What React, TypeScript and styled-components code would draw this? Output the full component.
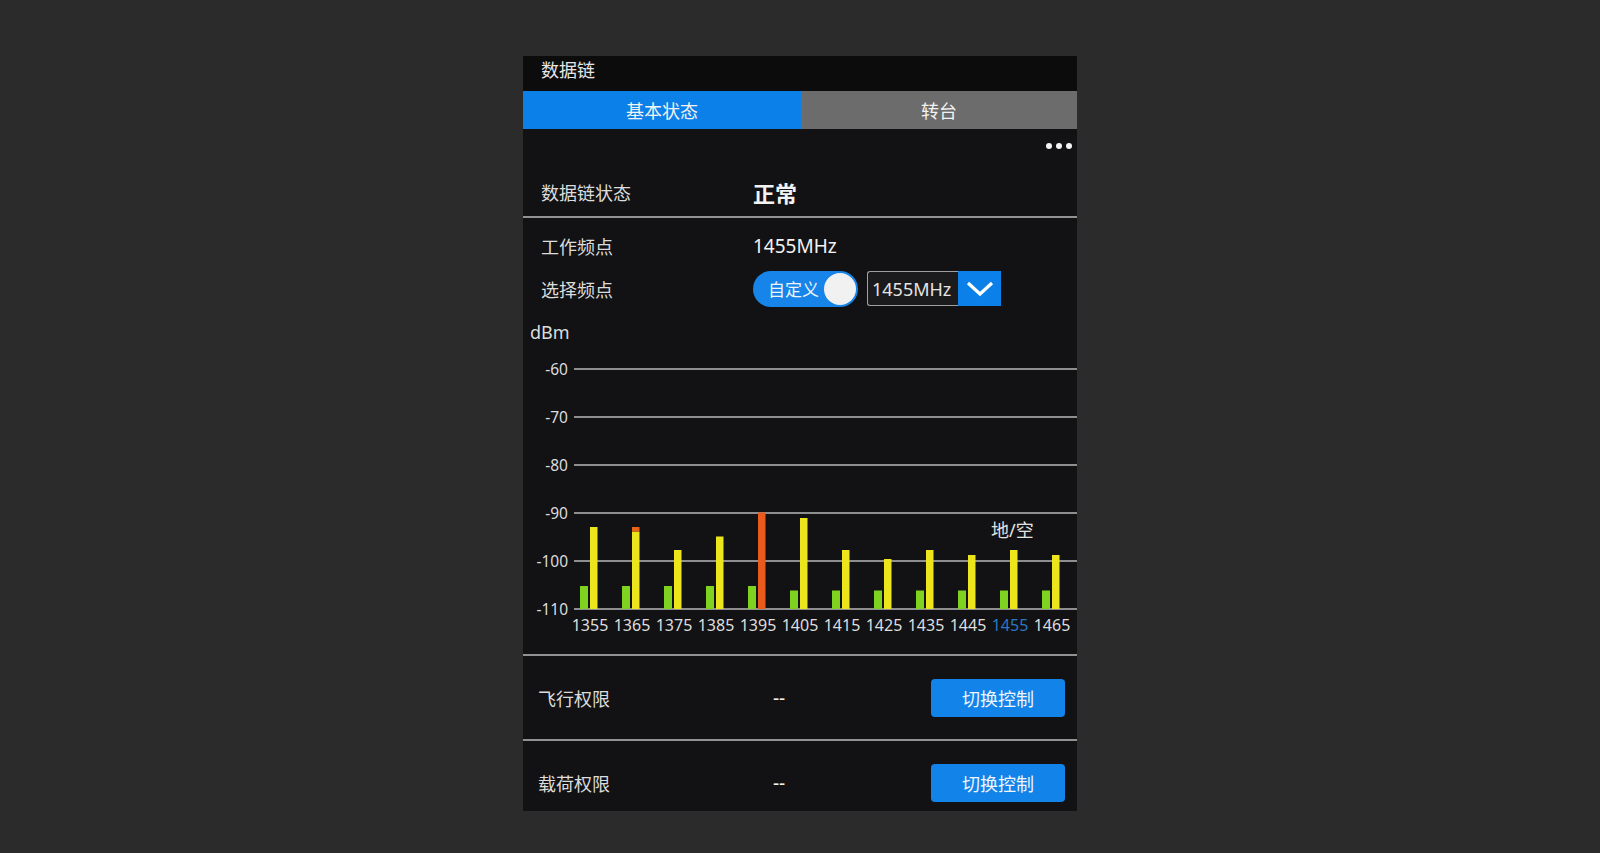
import styled, { createGlobalStyle } from 'styled-components'

const GlobalStyle = createGlobalStyle`
  *, *::before, *::after {
    box-sizing: border-box;
  }
  html, body {
    margin: 0;
    padding: 0;
    background: #2b2b2b;
  }
  body {
    font-family: "Noto Sans", "Noto Sans CJK SC", sans-serif;
    color: #e2e2e2;
  }
`

const Page = styled.div`
  width: 1600px;
  height: 853px;
  padding: 56px 0 0 523px;
`

const Panel = styled.div`
  width: 554px;
  height: 755px;
  background: #121214;
  overflow: hidden;
  display: flex;
  flex-direction: column;
`

const TitleBar = styled.div`
  height: 35px;
  flex-shrink: 0;
  background: #0c0c0d;
  display: flex;
  align-items: center;
  padding: 0 0 10px 18px;
  font-size: 18px;
  color: #e6e6e6;
`

const Tabs = styled.div`
  height: 38px;
  flex-shrink: 0;
  display: grid;
  grid-template-columns: 278px 1fr;
`

const Tab = styled.div<{ $active?: boolean }>`
  display: flex;
  align-items: center;
  justify-content: center;
  font-size: 18px;
  color: #f2f2f2;
  background: ${p => (p.$active ? '#0b80e9' : '#6c6c6c')};
`

const MoreRow = styled.div`
  height: 34px;
  flex-shrink: 0;
  display: flex;
  align-items: center;
  justify-content: flex-end;
  padding-right: 5px;
  gap: 4px;
`

const Dot = styled.span`
  width: 6px;
  height: 6px;
  border-radius: 50%;
  background: #f4f4f4;
`

const Row = styled.div<{ $h: number; $pad?: number; $labelW: number }>`
  height: ${p => p.$h}px;
  flex-shrink: 0;
  display: grid;
  grid-template-columns: ${p => p.$labelW}px 1fr auto;
  align-items: center;
  padding: 0 12px 0 ${p => p.$pad ?? 18}px;
  font-size: 18px;
`

const Label = styled.span`
  color: #dcdcdc;
`

const Value = styled.span<{ $big?: boolean }>`
  color: #f2f2f2;
  font-size: ${p => (p.$big ? '22px' : '19px')};
  font-weight: ${p => (p.$big ? 700 : 400)};
`

const Divider = styled.div`
  height: 2px;
  flex-shrink: 0;
  background: #929292;
`

const InfoBlock = styled.div`
  padding-top: 6px;
  display: flex;
  flex-direction: column;
  flex-shrink: 0;
`

const Controls = styled.div`
  display: flex;
  align-items: center;
  gap: 9px;
`

const Switch = styled.div`
  width: 105px;
  height: 36px;
  border-radius: 18px;
  background: #1684e8;
  display: flex;
  align-items: center;
  justify-content: space-between;
  padding: 0 2px 0 15px;
  font-size: 17px;
  color: #eef4fb;
`

const Knob = styled.span`
  width: 32px;
  height: 32px;
  border-radius: 50%;
  background: #f1f1f1;
`

const Select = styled.div`
  height: 35px;
  display: flex;
`

const SelectText = styled.div`
  width: 91px;
  border: 1px solid #a0a0a0;
  border-right: none;
  border-radius: 3px 0 0 3px;
  background: #1b1b1d;
  display: flex;
  align-items: center;
  padding-left: 4px;
  font-size: 18px;
  color: #e4e4e4;
  white-space: nowrap;
  overflow: hidden;
`

const SelectArrow = styled.div`
  width: 43px;
  background: #0b80e9;
  display: flex;
  align-items: center;
  justify-content: center;
`

const ChartWrap = styled.div`
  height: 344px;
  flex-shrink: 0;
`

const ActionButton = styled.button`
  width: 134px;
  height: 38px;
  border: none;
  border-radius: 4px;
  background: #1283e8;
  color: #eef4fb;
  font-family: inherit;
  font-size: 18px;
  cursor: pointer;
`

type Bar = { f: number; green: number; value: number; color: string; cap?: number }

const bars: Bar[] = [
  { f: 1355, green: 276, value: 217, color: '#ece51c' },
  { f: 1365, green: 276, value: 221.5, color: '#ece51c', cap: 217 },
  { f: 1375, green: 276, value: 240, color: '#ece51c' },
  { f: 1385, green: 276, value: 226.5, color: '#ece51c' },
  { f: 1395, green: 276, value: 202.5, color: '#ea5a1c' },
  { f: 1405, green: 280.5, value: 208, color: '#ece51c' },
  { f: 1415, green: 280.5, value: 240, color: '#ece51c' },
  { f: 1425, green: 280.5, value: 249, color: '#ece51c' },
  { f: 1435, green: 280.5, value: 240, color: '#ece51c' },
  { f: 1445, green: 280.5, value: 245, color: '#ece51c' },
  { f: 1455, green: 280.5, value: 240, color: '#ece51c' },
  { f: 1465, green: 280.5, value: 245, color: '#ece51c' },
]

const ticks = [-60, -70, -80, -90, -100, -110]
const BASE = 299

const Spectrum = () => (
  <svg width="554" height="344" viewBox="0 0 554 344">
    <g fontFamily='"Noto Sans", "Noto Sans CJK SC", sans-serif'>
      <text x="7" y="29" fontSize="18" fill="#dedede">dBm</text>
      {ticks.map((t, i) => (
        <g key={t}>
          <text x="45" y={59 + i * 48 + 5.5} fontSize="15.5" fill="#dcdcdc" textAnchor="end">{t}</text>
          <rect x="51" y={59 + i * 48 - 1} width="503" height="2" fill="#8e8e8e" />
        </g>
      ))}
      {bars.map((b, i) => {
        const xc = 67 + i * 42
        return (
          <g key={b.f}>
            <rect x={xc - 10} y={b.green} width="8" height={BASE - b.green} fill="#7fd21f" />
            <rect x={xc} y={b.value} width="7.5" height={BASE - b.value} fill={b.color} />
            {b.cap !== undefined && (
              <rect x={xc} y={b.cap} width="7.5" height={b.value - b.cap} fill="#e8621c" />
            )}
            <text x={xc} y="321" fontSize="16" textAnchor="middle" fill={b.f === 1455 ? '#2a78c2' : '#dedede'}>
              {b.f}
            </text>
          </g>
        )
      })}
      <text x="468" y="227" fontSize="18" fill="#e2e2e2">地/空</text>
    </g>
  </svg>
)

export default function App() {
  return (
    <>
      <GlobalStyle />
      <Page>
        <Panel>
          <TitleBar>数据链</TitleBar>
          <Tabs>
            <Tab $active>基本状态</Tab>
            <Tab>转台</Tab>
          </Tabs>
          <MoreRow>
            <Dot />
            <Dot />
            <Dot />
          </MoreRow>
          <Row $h={53} $labelW={212} style={{ paddingTop: 5 }}>
            <Label>数据链状态</Label>
            <Value $big>正常</Value>
          </Row>
          <Divider />
          <InfoBlock>
            <Row $h={43} $labelW={212}>
              <Label>工作频点</Label>
              <Value>1455MHz</Value>
            </Row>
            <Row $h={43} $labelW={212}>
              <Label>选择频点</Label>
              <Controls>
                <Switch>
                  自定义
                  <Knob />
                </Switch>
                <Select>
                  <SelectText>1455MHz</SelectText>
                  <SelectArrow>
                    <svg width="28" height="16" viewBox="0 0 28 16">
                      <path d="M2 2 L14 13 L26 2" fill="none" stroke="#ffffff" strokeWidth="3.2" strokeLinejoin="miter" />
                    </svg>
                  </SelectArrow>
                </Select>
              </Controls>
            </Row>
          </InfoBlock>
          <ChartWrap>
            <Spectrum />
          </ChartWrap>
          <Divider />
          <Row $h={83} $pad={15} $labelW={235}>
            <Label>飞行权限</Label>
            <Value>--</Value>
            <ActionButton>切换控制</ActionButton>
          </Row>
          <Divider />
          <Row $h={83} $pad={15} $labelW={235}>
            <Label>载荷权限</Label>
            <Value>--</Value>
            <ActionButton>切换控制</ActionButton>
          </Row>
        </Panel>
      </Page>
    </>
  )
}
